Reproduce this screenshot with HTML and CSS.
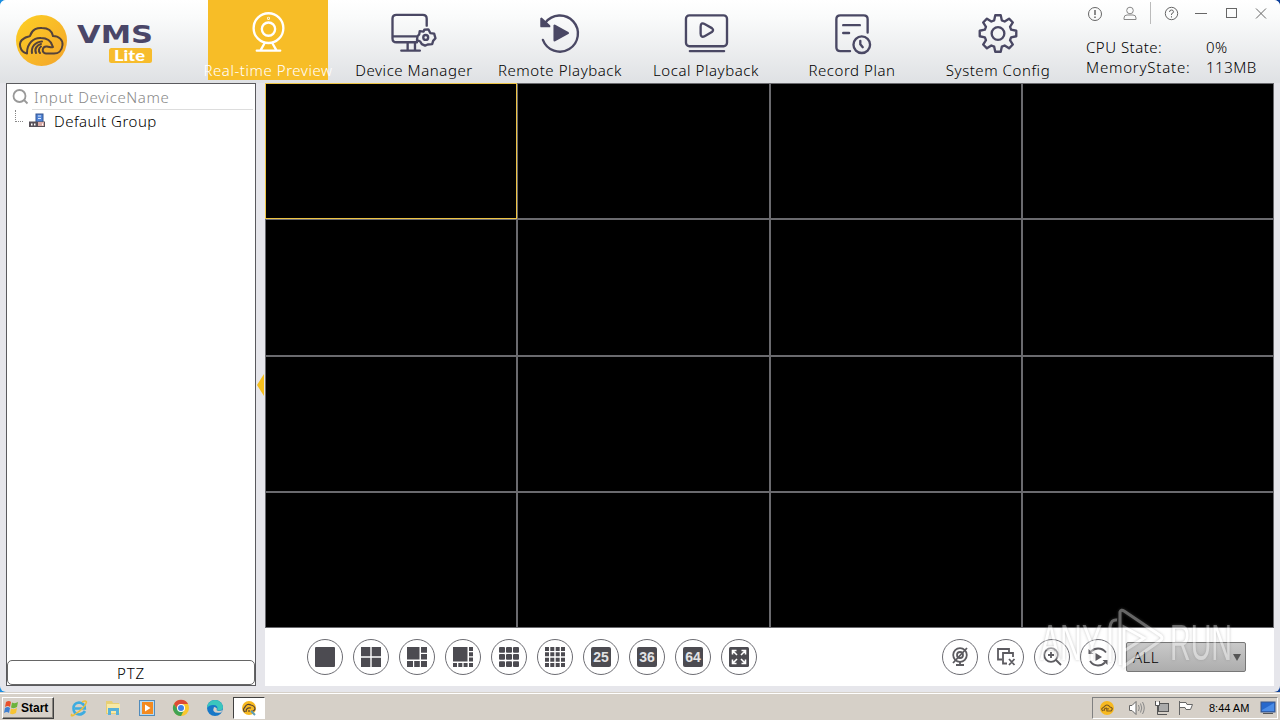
FILE: index.html
```html
<!DOCTYPE html>
<html lang="en">
<head>
    <meta charset="UTF-8">
    <meta name="viewport" content="width=device-width, initial-scale=1.0">
    <title>VMS Lite</title>
    <link rel="stylesheet" href="styles.css">
</head>
<body>
    <div class="window">
        <header>
            <div class="logo">
                <svg width="160" height="80" viewBox="0 0 160 80">
                    <defs>
                        <linearGradient id="sun" x1="0" y1="0" x2="1" y2="1">
                            <stop offset="0" stop-color="#fdd023"/>
                            <stop offset="1" stop-color="#f3a42c"/>
                        </linearGradient>
                    </defs>
                    <circle cx="41.5" cy="40.5" r="25.5" fill="url(#sun)"/>
                    <g fill="none" stroke="#54423a" stroke-width="2" stroke-linecap="round">
                        <path d="M27 53.5C20 52 17 42 24 38.500C26 36.500 29 37 30 36C32 29 38 27.500 42 28C48 28 52 31 53 36C59 36 63 40 62.500 45C62 51 58 53.500 54 53.500H46C41 53 42 46 47 46.500C50 47 51 48 53 47"/>
                        <path d="M27 53C27 43 34 37.500 41 38C47 38 51 41 52.500 46"/>
                        <path d="M32 53C31 47 35 42 42 41.500M36 53C34 49 37 45 41 44M40 53C38 51 39 48 41 46.500"/>
                    </g>
                    <text class="brand" x="77" y="43" textLength="76" lengthAdjust="spacingAndGlyphs">VMS</text>
                    <rect x="109" y="48" width="43" height="15" rx="2.500" fill="#f7bc2c"/>
                    <text class="brand-lite" x="114" y="60.500" textLength="31" lengthAdjust="spacingAndGlyphs">Lite</text>
                </svg>
            </div>
            <nav>
                <a class="tab active">
                    <svg width="52" height="44" viewBox="-26 -22 52 44">
                        <circle cx="0.500" cy="-5.500" r="15.200"/>
                        <circle cx="0.500" cy="-4.500" r="6.800"/>
                        <path d="M-3.500 10L-7.500 17M4.500 10L8.500 17M-11.500 17.500H12.500"/>
                        <circle cx="0.500" cy="-15.500" r="0.400"/>
                    </svg>
                    <span>Real-time Preview</span>
                </a>
                <a class="tab">
                    <svg width="52" height="44" viewBox="-26 -22 52 44">
                        <path d="M13 -8V-15Q13 -19 9 -19H-18Q-22 -19 -22 -15V5Q-22 9 -18 9H3M-22 3H2M-6.500 9V17M1 9V17M-13 17.500H6"/>
                        <path d="M9.500 -3.500L13.500 -4.500L16 -1L20 -1L22 3.500L20 6.500L19.500 10L15 11L12.500 12.500L9 11.500L7 9L3.500 8L3.500 4L5 2V-1.500L9 -1.500Z" transform="rotate(8 12.500 4)"/>
                        <circle cx="12" cy="4" r="2.500"/>
                    </svg>
                    <span>Device Manager</span>
                </a>
                <a class="tab">
                    <svg width="52" height="44" viewBox="-26 -22 52 44">
                        <path d="M-15 -11A18.500 18.500 0 1 1 -17.500 6.500"/>
                        <path class="solid" d="M-19 -15V-7.500H-11Z"/>
                        <path class="solid" d="M-5.500 -8V7L8 -0.500Z"/>
                    </svg>
                    <span>Remote Playback</span>
                </a>
                <a class="tab">
                    <svg width="52" height="44" viewBox="-26 -22 52 44">
                        <rect x="-20.500" y="-18.500" width="42" height="31.500" rx="3.500"/>
                        <path d="M-5.500 -7Q-5.500 -12 -1 -9.500L6 -5.500Q8.500 -3.500 6 -1.500L-1 2.500Q-5.500 5 -5.500 0ZM-16.500 18H18.500"/>
                    </svg>
                    <span>Local Playback</span>
                </a>
                <a class="tab">
                    <svg width="52" height="44" viewBox="-26 -22 52 44">
                        <path d="M16 -1V-14.500Q16 -18.500 12 -18.500H-12Q-16 -18.500 -16 -14.500V14Q-16 18 -12 18H-2M-9 -8.500H8M-9 -0.500H-3M8.500 7.500V11L11 14"/>
                        <circle cx="10" cy="11.500" r="8.500"/>
                    </svg>
                    <span>Record Plan</span>
                </a>
                <a class="tab">
                    <svg width="52" height="44" viewBox="-26 -22 52 44">
                        <path d="M-3.900 -13.500L-2.800 -18.700H2.800L3.900 -13.500L6.800 -12.300L11.300 -15.200L15.200 -11.300L12.300 -6.800L13.500 -3.900L18.700 -2.800V2.800L13.500 3.900L12.300 6.800L15.200 11.300L11.300 15.200L6.800 12.300L3.900 13.500L2.800 18.700H-2.800L-3.900 13.500L-6.800 12.300L-11.300 15.200L-15.200 11.300L-12.300 6.800L-13.500 3.900L-18.700 2.800V-2.800L-13.500 -3.900L-12.300 -6.800L-15.200 -11.300L-11.300 -15.200L-6.800 -12.300Z"/>
                        <circle r="6.500"/>
                    </svg>
                    <span>System Config</span>
                </a>
            </nav>
            <div class="status">
                <div class="window-buttons">
                    <svg width="16" height="16" viewBox="0 0 16 16"><circle cx="8" cy="8" r="6.500"/><path d="M8 4V9M8 10.500V12" stroke-width="1.500"/></svg>
                    <svg class="user" width="16" height="16" viewBox="0 0 16 16"><circle cx="8" cy="4.500" r="3.300"/><path d="M2 13.500V12Q2 9 5 9H11Q14 9 14 12V13.500Z"/></svg>
                    <i class="divider"></i>
                    <svg width="16" height="16" viewBox="0 0 16 16"><circle cx="8.500" cy="7.500" r="6.200"/><path d="M6.500 6Q6.500 4 8.500 4T10.500 5.800Q10.500 7 8.500 7.800V9M8.500 10.200V11.500"/></svg>
                    <svg width="16" height="16" viewBox="0 0 16 16"><path d="M2 7.500H14"/></svg>
                    <svg width="16" height="16" viewBox="0 0 16 16"><rect x="3.500" y="2.500" width="10" height="9"/></svg>
                    <svg width="16" height="16" viewBox="0 0 16 16"><path d="M3 2.500L13 12.500M13 2.500L3 12.500"/></svg>
                </div>
                <div class="state"><span>CPU State:</span><span>0%</span></div>
                <div class="state"><span class="wide">MemoryState:</span><span>113MB</span></div>
            </div>
        </header>

        <main>
            <aside>
                <div class="search">
                    <svg width="18" height="18" viewBox="0 0 18 18"><circle cx="7.500" cy="8" r="6"/><path d="M12 12L15.500 15.500"/></svg>
                    <span>Input DeviceName</span>
                </div>
                <div class="group">
                    <i class="branch"></i>
                    <svg width="18" height="16" viewBox="0 0 18 16">
                        <rect x="8" y="1" width="7" height="9" fill="#4f83d6" stroke="#34548f"/>
                        <path d="M10 3H13M10 5.500H13" stroke="#dce9ff"/>
                        <rect x="1" y="8.500" width="16" height="5.500" fill="#565058"/>
                        <rect x="10" y="9" width="6" height="4" fill="#d8aaa6"/>
                        <path d="M3 11.500H4.500M6 11.500H7.500M14 11.500H15" stroke="#fff" stroke-width="2"/>
                    </svg>
                    <span>Default Group</span>
                </div>
                <button class="ptz">PTZ</button>
            </aside>
            <div class="splitter"><i></i></div>
            <section>
                <div class="screens">
                    <div class="screen selected"></div><div class="screen"></div><div class="screen"></div><div class="screen"></div>
                    <div class="screen"></div><div class="screen"></div><div class="screen"></div><div class="screen"></div>
                    <div class="screen"></div><div class="screen"></div><div class="screen"></div><div class="screen"></div>
                    <div class="screen"></div><div class="screen"></div><div class="screen"></div><div class="screen"></div>
                </div>
                <div class="toolbar">
                    <a class="round"><svg width="20" height="20"><rect width="20" height="20" rx="1"/></svg></a>
                    <a class="round"><svg width="20" height="20"><path d="M0 0H9.300V9.300H0ZM10.700 0H20V9.300H10.700ZM0 10.700H9.300V20H0ZM10.700 10.700H20V20H10.700Z"/></svg></a>
                    <a class="round"><svg width="20" height="20"><path d="M0 0H12.500V12.500H0ZM14 0H20V5.800H14ZM14 7H20V12.500H14ZM0 14H6V20H0ZM7.200 14H12.800V20H7.200ZM14 14H20V20H14Z"/></svg></a>
                    <a class="round"><svg width="20" height="20"><path d="M0 0H14.500V14.500H0ZM16 0H20V4H16ZM16 5.300H20V9.300H16ZM16 10.600H20V14.600H16ZM0 16H4V20H0ZM5.300 16H9.300V20H5.300ZM10.600 16H14.600V20H10.600ZM16 16H20V20H16Z"/></svg></a>
                    <a class="round"><svg width="20" height="20"><g id="row3"><rect width="6" height="5.700" rx="1"/><rect x="7" width="6" height="5.700" rx="1"/><rect x="14" width="6" height="5.700" rx="1"/></g><use href="#row3" y="7.100"/><use href="#row3" y="14.200"/></svg></a>
                    <a class="round"><svg width="20" height="20"><g id="row4"><path d="M0 0H4V4H0ZM5.300 0H9.300V4H5.300ZM10.700 0H14.700V4H10.700ZM16 0H20V4H16Z"/></g><use href="#row4" y="5.300"/><use href="#row4" y="10.700"/><use href="#row4" y="16"/></svg></a>
                    <a class="round"><b>25</b></a>
                    <a class="round"><b>36</b></a>
                    <a class="round"><b>64</b></a>
                    <a class="round"><svg width="20" height="20"><rect width="20" height="20" rx="1.500"/><path class="arrows" d="M8 8L4 4M3.500 7.500V3.500H7.500M12 8L16 4M12.500 3.500H16.500V7.500M8 12L4 16M3.500 12.500V16.500H7.500M12 12L16 16M12.500 16.500H16.500V12.500"/></svg></a>
                    <div class="tools">
                        <a class="round line"><svg width="20" height="20"><circle cx="10" cy="8" r="6.800"/><circle cx="10" cy="8" r="3"/><path d="M10 15V18M6 18H14M3 16L17 1"/></svg></a>
                        <a class="round line"><svg width="20" height="20"><path d="M6 12.500H2V2H13V5.500M11 16.500H7V6H17V10M13 12L18.500 18M18.500 12L13 18"/></svg></a>
                        <a class="round line"><svg width="20" height="20"><circle cx="9" cy="8" r="6.800"/><path d="M14 13L19 18M9 5V11M6 8H12"/></svg></a>
                        <a class="round line"><svg width="20" height="20"><path d="M3 4.500Q6 1.500 10 1.500Q15 1.500 18 5.500M2 14Q5 18.500 10 18.500Q14 18.500 17 15.500"/><path class="fill" d="M7.500 6V14L14 10ZM0.500 2V7H5.500ZM19.500 18V13H14.500Z"/></svg></a>
                        <div class="select"><span>ALL</span><i></i></div>
                    </div>
                </div>
            </section>
        </main>
    </div>

    <footer>
        <div class="start">
            <svg width="15" height="15" viewBox="0 0 15 15"><path d="M2 2Q5 0 7 2L6 7Q4 5 1 7Z" fill="#e8502b"/><path d="M8 2.500Q11 4 14 2L13 7Q10 9 7 7.500Z" fill="#6cb33c"/><path d="M1 8Q4 6 6 8L5 13Q3 11 0 13Z" fill="#3f7fd0"/><path d="M7 8.500Q10 10 13 8L12 13Q9 15 6 13.500Z" fill="#f7c433"/></svg>
            <span>Start</span>
        </div>
        <div class="quick">
            <svg width="18" height="18" viewBox="0 0 18 18"><path d="M15 12Q13 15.500 9 15.500Q3.500 15 3.500 9.500T9 3.500Q14.500 4 14.800 9.500H5" fill="none" stroke="#3eace0" stroke-width="2.600"/><path d="M2 15Q0 18 4 16Q15 9 16.500 3Q16 1 12 3" fill="none" stroke="#edbf3a" stroke-width="1.400"/></svg>
            <svg width="18" height="18" viewBox="0 0 18 18"><path d="M2 2H8L9 4H15V15H2Z" fill="#e7cf75"/><path d="M3 5H16V14H3Z" fill="#f8e9a5"/><path d="M4 16V9H15V16H12V12H7V16Z" fill="#59b1d8"/></svg>
            <svg width="18" height="18" viewBox="0 0 18 18"><rect x="1.500" y="1.500" width="15" height="15" fill="#b9daf0" stroke="#518bbb"/><rect x="4" y="3" width="11" height="12" fill="#f38a20"/><path d="M7 5.500V12.500L12.500 9Z" fill="#fff"/></svg>
            <svg width="18" height="18" viewBox="0 0 18 18"><circle cx="9" cy="9" r="8" fill="#f9c72e"/><path d="M2 5A8 8 0 0 1 16 5H9L6 11Z" fill="#dd4a36"/><path d="M2 5A8 8 0 0 0 9 17L12 11H6Z" fill="#40a354"/><circle cx="9" cy="9" r="4" fill="#fff"/><circle cx="9" cy="9" r="3" fill="#4081e8"/></svg>
            <svg width="18" height="18" viewBox="0 0 18 18"><circle cx="9" cy="9" r="8" fill="#1878c7"/><path d="M1 9A8 8 0 0 1 17 9Q16 12 11 11.500Q13 6 7 6Q3 6 1 9Z" fill="#3bc6bd"/><path d="M8 8Q5 15 15 13.500L17 11Q12 13 10.500 11Q12 9 8 8Z" fill="#d6d0c8"/></svg>
        </div>
        <div class="task">
            <svg width="16" height="16" viewBox="0 0 16 16"><circle cx="8" cy="8" r="7" fill="#f7b920"/><path d="M4 12Q1 10 4 7Q6 3 10 5Q14 6 14 9Q13 12 10 11M5 12Q5 7 10 8M8 12V10" fill="none" stroke="#54423a" stroke-width="1.200"/><path d="M10 11L14 15" stroke="#5e9eb4" stroke-width="2"/></svg>
        </div>
        <div class="tray">
            <svg width="16" height="16" viewBox="0 0 16 16"><circle cx="8" cy="8" r="7" fill="#f7b920"/><path d="M4 11Q1 9 5 7Q8 3 11 7Q15 8 12 11H8Q7 8 10 9M5 11Q5 8 8 8" fill="none" stroke="#7a5922" stroke-width="1.200"/></svg>
            <svg class="sound" width="18" height="16" viewBox="0 0 18 16"><path d="M1.500 5.500H4L8 1.500V14.500L4 10.500H1.500Z" fill="#fff" stroke="#666"/><path d="M10.500 5Q12 8 10.500 11M12.500 3.500Q15 8 12.500 12.500M14.500 2Q18 8 14.500 14" fill="none" stroke="#888"/></svg>
            <svg class="net" width="16" height="16" viewBox="0 0 16 16"><rect x="4.500" y="3.500" width="10" height="8" fill="#aaa" stroke="#555"/><path d="M1.500 1V5.500H5.500V1M3.500 6V14.500H13" fill="none" stroke="#555"/><path d="M2 2H5V5H2Z" fill="#fff"/></svg>
            <svg class="flag" width="16" height="16" viewBox="0 0 16 16"><path d="M1.500 1V15M2 2.500H8L9 4.500H14.500L12.500 9.500H8L7 7.500H2" fill="#fff" stroke="#666"/></svg>
            <time>8:44 AM</time>
            <svg class="desk" width="16" height="14" viewBox="0 0 16 14"><rect x="1" y="1" width="14" height="10" fill="#2768cc" stroke="#3b5688"/><path d="M2 9L14 2V10H2Z" fill="#4b8ce6"/><path d="M3 12.500H13" stroke="#555"/></svg>
        </div>
    </footer>

    <svg class="watermark" width="204" height="76" viewBox="0 0 204 76">
        <g fill="#fff">
            <text x="3" y="55" textLength="62" lengthAdjust="spacingAndGlyphs">ANY</text>
            <text x="133" y="55" textLength="62" lengthAdjust="spacingAndGlyphs">RUN</text>
        </g>
        <path d="M73 57V22Q74 14 80 15M83 60V7Q84 4 87 6L124 31Q126 33 124 35L87 61V22L107 33L87 46" fill="none" stroke="#fff" stroke-width="3"/>
    </svg>
</body>
</html>
```
FILE: styles.css
```css
body {
    margin: 0;
    width: 1280px;
    height: 720px;
    overflow: hidden;
    position: relative;
    background: linear-gradient(to right, #1d8fe0, #0b3f9a);
    font-family: "Noto Sans", "Open Sans", sans-serif;
    font-size: 15px;
    font-weight: 300;
    letter-spacing: 0.5px;
    color: #000;
}

.window {
    height: 692px;
    border-radius: 6px;
    background-color: #e6e6eb;
    overflow: hidden;
}

header {
    display: flex;
    height: 83px;
    background: linear-gradient(#fff, #fafbfb 20%, #dfe1e4);
}

.logo {
    width: 208px;
    letter-spacing: 0;
}

.brand {
    font: bold 24px "DejaVu Sans", sans-serif;
    fill: #4a4668;
}

.brand-lite {
    font: 900 14.5px "Lato", sans-serif;
    fill: #fff;
}

nav {
    display: flex;
    gap: 26px;
}

.tab {
    display: flex;
    flex-direction: column;
    align-items: center;
    box-sizing: border-box;
    width: 120px;
    height: 80px;
    padding-top: 12px;
}

.tab svg {
    fill: none;
    stroke: #4a4864;
    stroke-width: 2.4;
    stroke-linecap: round;
    stroke-linejoin: round;
}

.tab .solid {
    fill: #4a4864;
}

.tab span {
    margin-top: 5px;
    line-height: 20px;
    white-space: nowrap;
    letter-spacing: 0.55px;
}

.tab.active {
    background-color: #f7bd27;
    color: #fff;
}

.tab.active svg {
    stroke: #fff;
}

.status {
    margin-left: 28px;
}

.window-buttons {
    display: flex;
    gap: 14px;
    height: 31px;
    padding: 6px 0 0 1px;
}

.window-buttons svg {
    fill: none;
    stroke: #666;
}

.window-buttons .user {
    margin-left: 5px;
    stroke: #888;
}

.window-buttons .divider {
    width: 1px;
    height: 22px;
    margin: -4px -2px 0;
    background-color: #bbb;
}

.state {
    display: grid;
    grid-template-columns: 120px 60px;
    line-height: 20px;
}

.state .wide {
    letter-spacing: 0.8px;
}

main {
    display: flex;
    height: 603px;
}

aside {
    display: flex;
    flex-direction: column;
    box-sizing: border-box;
    width: 250px;
    margin-left: 6px;
    border: 1px solid #5a5a5e;
    background-color: #fff;
}

.search {
    display: flex;
    align-items: center;
    height: 26px;
    padding-left: 5px;
    gap: 4px;
    background: linear-gradient(#ddd, #ddd) 25px 25px / 221px 1px no-repeat;
    color: #888;
}

.search span {
    letter-spacing: 0.6px;
}

.search svg {
    fill: none;
    stroke: #999;
    stroke-width: 1.8;
}

.group {
    display: flex;
    align-items: center;
    height: 21px;
    padding-left: 8px;
}

.group svg {
    margin: 0 8px 0 5px;
}

.branch {
    width: 7px;
    height: 11px;
    margin-bottom: 10px;
    border-left: 1px dotted #888;
    border-bottom: 1px dotted #888;
}

.ptz {
    height: 25px;
    margin-top: auto;
    padding: 0;
    border: 1px solid #666;
    border-radius: 5px;
    background-color: #fff;
    font: inherit;
    letter-spacing: 0.8px;
    color: #000;
}

.splitter {
    display: flex;
    align-items: center;
    width: 9px;
}

.splitter i {
    margin-left: 1px;
    border: 11px solid transparent;
    border-left-width: 0;
    border-right: 7px solid #f6bf1c;
}

section {
    width: 1009px;
}

.screens {
    display: grid;
    grid-template-columns: repeat(4, 1fr);
    grid-template-rows: repeat(4, 1fr);
    height: 545px;
}

.screen {
    background-color: #000;
    border: 1px solid #6a6a6e;
}

.screen.selected {
    border-color: #edc445;
}

.toolbar {
    display: flex;
    align-items: center;
    gap: 10px;
    height: 58px;
    padding: 0 28px 0 42px;
    background-color: #fff;
}

.round {
    display: flex;
    align-items: center;
    justify-content: center;
    box-sizing: border-box;
    width: 36px;
    height: 36px;
    border: 1px solid #6d6d73;
    border-radius: 50%;
}

.round svg {
    fill: #4c4b51;
}

.round b {
    width: 20px;
    height: 20px;
    border-radius: 2px;
    background-color: #4c4b51;
    color: #e3e3e5;
    font: bold 14px/20px "Liberation Sans", sans-serif;
    letter-spacing: 0;
    text-align: center;
}

.round .arrows {
    fill: none;
    stroke: #fff;
    stroke-width: 1.6;
}

.round.line svg {
    fill: none;
    stroke: #5c5b60;
    stroke-width: 1.8;
}

.round .fill {
    fill: #5c5b60;
    stroke: none;
}

.tools {
    display: flex;
    align-items: center;
    gap: 10px;
    margin-left: auto;
}

.select {
    display: flex;
    align-items: center;
    justify-content: space-between;
    box-sizing: border-box;
    width: 120px;
    height: 30px;
    padding: 0 4px 0 6px;
    border: 1px solid #777;
    border-radius: 2px;
    background: linear-gradient(#c9c9c9, #adadad);
}

.select i {
    border: 4px solid transparent;
    border-top: 7px solid #555;
    border-bottom: 0;
}

footer {
    display: flex;
    align-items: center;
    box-sizing: border-box;
    height: 28px;
    padding: 2px 2px 0;
    border-top: 1px solid #d6d0c8;
    background-color: #d6d0c8;
    box-shadow: inset 0 1px #fff;
    font-family: "Liberation Sans", sans-serif;
    font-weight: 400;
    letter-spacing: 0;
}

.start {
    display: flex;
    align-items: center;
    gap: 2px;
    box-sizing: border-box;
    width: 52px;
    height: 22px;
    padding-left: 1px;
    border: 1px solid;
    border-color: #fff #404040 #404040 #fff;
    box-shadow: inset -1px -1px #8a8680;
    font-size: 12px;
    font-weight: bold;
}

.quick {
    display: flex;
    gap: 16px;
    margin-left: 16px;
}

.task {
    display: flex;
    align-items: center;
    justify-content: center;
    box-sizing: border-box;
    width: 32px;
    height: 22px;
    margin-left: 9px;
    border: 1px solid;
    border-color: #404040 #fff #fff #404040;
    background-color: #fff;
}

.tray {
    display: flex;
    align-items: center;
    box-sizing: border-box;
    width: 186px;
    height: 22px;
    margin-left: auto;
    padding-left: 6px;
    border: 1px solid;
    border-color: #808080 #fff #fff #808080;
}

.sound {
    margin-left: 13px;
}

.net, .flag {
    margin-left: 8px;
}

time {
    width: 42px;
    margin-left: 15px;
    font-size: 11px;
    white-space: nowrap;
}

.desk {
    margin-left: 9px;
}

/* sits over the video grid and the toolbar */
.watermark {
    position: absolute;
    left: 1037px;
    top: 605px;
    overflow: visible;
    opacity: 0.4;
    filter: drop-shadow(0 0 1.5px #777);
    font: 50px "Liberation Sans", sans-serif;
    letter-spacing: 0;
}
```
